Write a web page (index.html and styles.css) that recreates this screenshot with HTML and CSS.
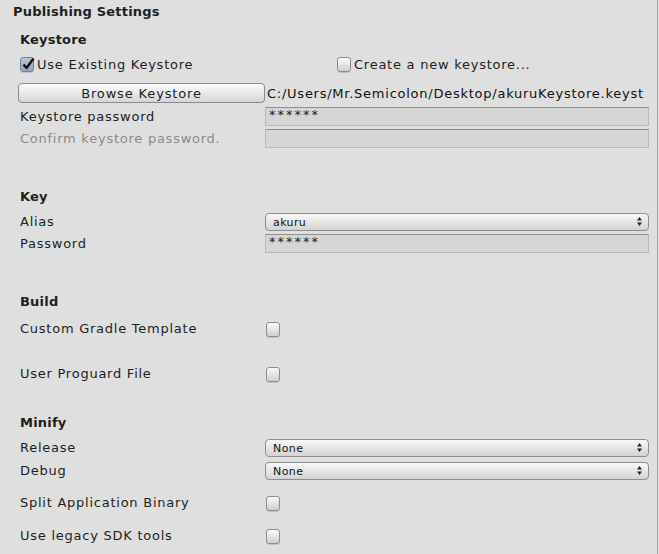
FILE: index.html
```html
<!DOCTYPE html>
<html lang="en">
<head>
    <meta charset="UTF-8">
    <meta name="viewport" content="width=device-width, initial-scale=1.0">
    <title>Publishing Settings</title>
    <link rel="stylesheet" href="styles.css">
</head>
<body>
    <div class="panel">
        <div class="title">Publishing Settings</div>

        <!-- Keystore -->
        <div class="heading first">Keystore</div>
        <div class="toggle-row">
            <label class="option">
                <span class="check checked">
                    <svg width="14" height="14" viewBox="0 0 14 14"><path d="M2.5 7.5 L5.5 11 L12.5 1.5" fill="none" stroke="#111" stroke-width="2.4" stroke-linejoin="round"/></svg>
                </span>
                Use Existing Keystore
            </label>
            <label class="option">
                <span class="check"></span>
                Create a new keystore...
            </label>
        </div>
        <div class="browse-row">
            <button class="browse">Browse Keystore</button>
            <span class="path">C:/Users/Mr.Semicolon/Desktop/akuruKeystore.keyst</span>
        </div>
        <div class="row r-first">
            <span class="label">Keystore password</span>
            <div class="field">******</div>
        </div>
        <div class="row r-next">
            <span class="label disabled">Confirm keystore password.</span>
            <div class="field"></div>
        </div>

        <!-- Key -->
        <div class="heading gap-l">Key</div>
        <div class="row r-first">
            <span class="label">Alias</span>
            <div class="popup">akuru<svg class="arrows" width="5" height="9" viewBox="0 0 5 9"><path d="M2.5 0 L5 3.5 H0 Z M0 5.5 H5 L2.5 9 Z" fill="#222"/></svg></div>
        </div>
        <div class="row r-next">
            <span class="label">Password</span>
            <div class="field">******</div>
        </div>

        <!-- Build -->
        <div class="heading gap-m">Build</div>
        <div class="row check-row c-first">
            <span class="label">Custom Gradle Template</span>
            <span class="check"></span>
        </div>
        <div class="row check-row gap-s">
            <span class="label">User Proguard File</span>
            <span class="check"></span>
        </div>

        <!-- Minify -->
        <div class="heading gap-m2">Minify</div>
        <div class="row r-first">
            <span class="label">Release</span>
            <div class="popup">None<svg class="arrows" width="5" height="9" viewBox="0 0 5 9"><path d="M2.5 0 L5 3.5 H0 Z M0 5.5 H5 L2.5 9 Z" fill="#222"/></svg></div>
        </div>
        <div class="row r-popup">
            <span class="label">Debug</span>
            <div class="popup">None<svg class="arrows" width="5" height="9" viewBox="0 0 5 9"><path d="M2.5 0 L5 3.5 H0 Z M0 5.5 H5 L2.5 9 Z" fill="#222"/></svg></div>
        </div>
        <div class="row check-row gap-xs">
            <span class="label">Split Application Binary</span>
            <span class="check"></span>
        </div>
        <div class="row check-row gap-xs">
            <span class="label">Use legacy SDK tools</span>
            <span class="check"></span>
        </div>
    </div>
</body>
</html>
```

FILE: styles.css
```css
body {
    margin: 0;
    background-color: #dfdfdf;
    font-family: "DejaVu Sans", Verdana, sans-serif;
    font-size: 13px;
    letter-spacing: 0.75px;
    color: #1e1e1e;
}

.panel {
    box-sizing: border-box;
    width: 658px;
    height: 554px;
    padding-right: 8px;
    border-right: 1px solid #a4a4a4;
    display: flex;
    flex-direction: column;
}

.title {
    height: 23px;
    line-height: 23px;
    padding-left: 13px;
    font-weight: bold;
    letter-spacing: 0.2px;
}

.heading {
    height: 22px;
    line-height: 22px;
    padding-left: 20px;
    font-weight: bold;
    letter-spacing: 0.2px;
}

.heading.first { margin-top: 6px; }
.heading.gap-l { margin-top: 38px; }
.heading.gap-m { margin-top: 38px; }
.heading.gap-m2 { margin-top: 28px; }

/* toggles under Keystore */
.toggle-row {
    display: flex;
    align-items: center;
    height: 20px;
    margin-top: 3px;
    padding-left: 20px;
}

.option {
    display: flex;
    align-items: center;
    gap: 3px;
}

.option:first-child {
    width: 317px;
}

.check {
    box-sizing: border-box;
    width: 14px;
    height: 15px;
    border: 1px solid #8c8c8c;
    border-radius: 3px;
    background: linear-gradient(#fafafa, #cfcfcf);
    box-shadow: 0 1px 0 rgba(0, 0, 0, 0.12);
    position: relative;
    flex-shrink: 0;
}

.check.checked {
    background: linear-gradient(#b9c7dc, #8fa4c6);
    border-color: #6f7f98;
}

.check svg {
    position: absolute;
    left: 0;
    top: -1px;
}

.browse-row {
    display: flex;
    align-items: center;
    height: 20px;
    margin-top: 9px;
    padding-left: 18px;
}

.browse {
    width: 247px;
    height: 20px;
    padding: 0;
    font-family: inherit;
    font-size: 13px;
    letter-spacing: 0.85px;
    color: #1e1e1e;
    border: 1px solid #8a8a8a;
    border-radius: 4px;
    background: linear-gradient(#fbfbfb, #d6d6d6);
}

.path {
    margin-left: 2px;
    white-space: nowrap;
    color: #111;
}

.row {
    display: flex;
    align-items: center;
    padding-left: 20px;
    height: 19px;
}

.row.r-first { margin-top: 4px; }
.row.r-next { margin-top: 3px; }
.row.r-popup { margin-top: 4px; }
.row.c-first { margin-top: 6px; }
.row.gap-s { margin-top: 25px; }
.row.gap-xs { margin-top: 13px; }

.check-row {
    height: 20px;
}

.check-row .check {
    margin-left: 1px;
}

.label {
    width: 245px;
    flex-shrink: 0;
    margin-top: -1px;
}

.label.disabled {
    color: #8b8b8b;
}

.field {
    box-sizing: border-box;
    flex: 1;
    height: 19px;
    padding: 0 3px;
    line-height: 14px;
    font-size: 13px;
    letter-spacing: 2px;
    background-color: #d6d6d6;
    border: 1px solid #b9b9b9;
    border-top-color: #8f8f8f;
    color: #222;
}

.popup {
    box-sizing: border-box;
    flex: 1;
    height: 18px;
    padding: 2px 6px 0 7px;
    display: flex;
    align-items: center;
    justify-content: space-between;
    font-size: 11px;
    letter-spacing: 0.4px;
    color: #111;
    border: 1px solid #8e8e8e;
    border-radius: 4px;
    background: linear-gradient(#f9f9f9, #d3d3d3);
}

.popup .arrows {
    flex-shrink: 0;
    margin-top: -2px;
}
```
